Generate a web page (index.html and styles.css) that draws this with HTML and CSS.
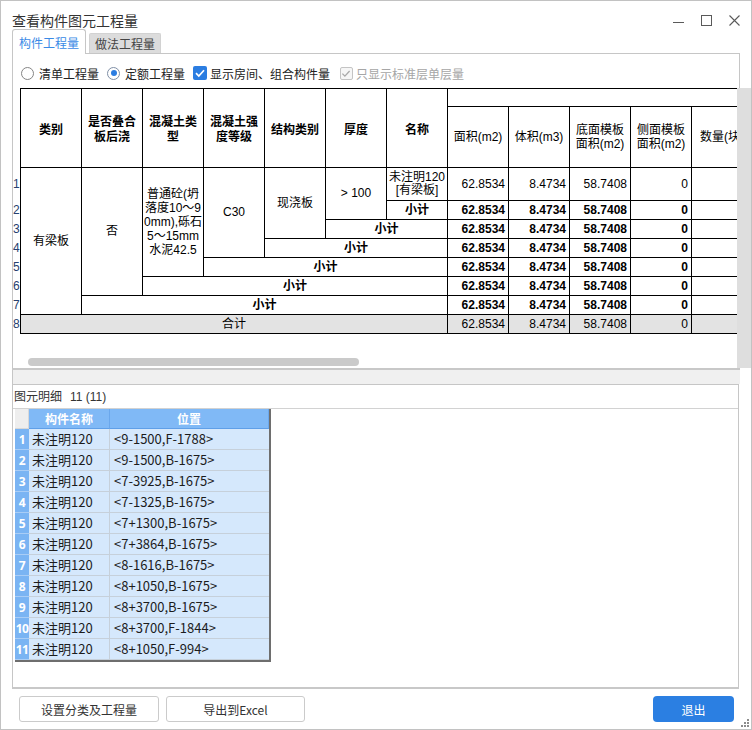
FILE: index.html
```html
<!DOCTYPE html>
<html lang="zh-CN">
<head>
<meta charset="utf-8">
<title>查看构件图元工程量</title>
<link rel="stylesheet" href="styles.css">
</head>
<body>
<div class="window">
  <div class="titlebar">
    <div class="title">查看构件图元工程量</div>
    <div class="controls">
      <svg width="11" height="11" viewBox="0 0 11 11"><path d="M0 7.5H11" stroke="#5a5a5a" stroke-width="1"/></svg>
      <svg width="11" height="11" viewBox="0 0 11 11"><rect x="0.5" y="0.5" width="10" height="10" fill="none" stroke="#5a5a5a" stroke-width="1"/></svg>
      <svg width="11" height="11" viewBox="0 0 11 11"><path d="M0.5 0.5L10.5 10.5M10.5 0.5L0.5 10.5" stroke="#5a5a5a" stroke-width="1.1"/></svg>
    </div>
  </div>

  <div class="tabs">
    <div class="tab active">构件工程量</div>
    <div class="tab">做法工程量</div>
  </div>

  <div class="panel-top">
    <div class="options">
      <label class="opt"><span class="radio"></span><span>清单工程量</span></label>
      <label class="opt"><span class="radio on"></span><span>定额工程量</span></label>
      <label class="opt"><span class="check"><svg width="14" height="14" viewBox="0 0 14 14"><path d="M3 7.2L5.8 10L11 4.2" fill="none" stroke="#fff" stroke-width="1.7"/></svg></span><span>显示房间、组合构件量</span></label>
      <label class="opt opt-dis"><span class="check dis"><svg width="13" height="13" viewBox="0 0 13 13"><path d="M2.6 6.6L5.3 9.3L10.4 3.8" fill="none" stroke="#a9a9a9" stroke-width="1.4"/></svg></span><span>只显示标准层单层量</span></label>
    </div>

    <div class="table-area">
      <div class="viewport">
        <div class="sheet">
          <div class="gutter">
            <div class="g-head"></div>
            <div class="g-row tall">1</div>
            <div class="g-row">2</div>
            <div class="g-row">3</div>
            <div class="g-row">4</div>
            <div class="g-row">5</div>
            <div class="g-row">6</div>
            <div class="g-row">7</div>
            <div class="g-row">8</div>
          </div>
          <div class="grid">
            <div class="c h x1 y1 ry2">类别</div>
            <div class="c h x2 y1 ry2">是否叠合<br>板后浇</div>
            <div class="c h x3 y1 ry2">混凝土类<br>型</div>
            <div class="c h x4 y1 ry2">混凝土强<br>度等级</div>
            <div class="c h x5 y1 ry2">结构类别</div>
            <div class="c h x6 y1 ry2">厚度</div>
            <div class="c h x7 y1 ry2">名称</div>
            <div class="c x8 y1 cx5"></div>

            <div class="c x1 y3 ry7">有梁板</div>
            <div class="c x2 y3 ry6">否</div>
            <div class="c x3 y3 ry5 ml">普通砼(坍<br>落度10～9<br>0mm),砾石<br>5～15mm<br>水泥42.5</div>
            <div class="c x4 y3 ry4">C30</div>
            <div class="c x5 y3 ry3">现浇板</div>
            <div class="c x6 y3 ry2">&gt; 100</div>
            <div class="c x7 y3 nm">未注明120<br>[有梁板]</div>
            <div class="c x7 y4 b">小计</div>
            <div class="c x6 y5 cx2 b">小计</div>
            <div class="c x5 y6 cx3 b">小计</div>
            <div class="c x4 y7 cx4 b">小计</div>
            <div class="c x3 y8 cx5 b">小计</div>
            <div class="c x2 y9 cx6 b">小计</div>
            <div class="c x1 y10 cx7 g">合计</div>

            <div class="c hs">面积(m2)</div>
            <div class="c hs">体积(m3)</div>
            <div class="c hs">底面模板<br>面积(m2)</div>
            <div class="c hs">侧面模板<br>面积(m2)</div>
            <div class="c hs">数量(块)</div>

            <div class="c n">62.8534</div><div class="c n">8.4734</div><div class="c n">58.7408</div><div class="c n">0</div><div class="c n"></div>
            <div class="c n b">62.8534</div><div class="c n b">8.4734</div><div class="c n b">58.7408</div><div class="c n b">0</div><div class="c n"></div>
            <div class="c n b">62.8534</div><div class="c n b">8.4734</div><div class="c n b">58.7408</div><div class="c n b">0</div><div class="c n"></div>
            <div class="c n b">62.8534</div><div class="c n b">8.4734</div><div class="c n b">58.7408</div><div class="c n b">0</div><div class="c n"></div>
            <div class="c n b">62.8534</div><div class="c n b">8.4734</div><div class="c n b">58.7408</div><div class="c n b">0</div><div class="c n"></div>
            <div class="c n b">62.8534</div><div class="c n b">8.4734</div><div class="c n b">58.7408</div><div class="c n b">0</div><div class="c n"></div>
            <div class="c n b">62.8534</div><div class="c n b">8.4734</div><div class="c n b">58.7408</div><div class="c n b">0</div><div class="c n"></div>
            <div class="c n g">62.8534</div><div class="c n g">8.4734</div><div class="c n g">58.7408</div><div class="c n g">0</div><div class="c n g"></div>
          </div>
        </div>
        <div class="hscroll"></div>
      </div>
      <div class="vstrip"></div>
    </div>
  </div>

  <div class="splitter"></div>

  <div class="panel-bottom">
    <div class="caption">图元明细<span class="count">11 (11)</span></div>
    <div class="grid2">
      <div class="g2-corner"></div><div class="g2-head">构件名称</div><div class="g2-head">位置</div>
      <div class="g2-num">1</div><div class="g2-cell">未注明120</div><div class="g2-cell pos">&lt;9-1500,F-1788&gt;</div>
      <div class="g2-num">2</div><div class="g2-cell">未注明120</div><div class="g2-cell pos">&lt;9-1500,B-1675&gt;</div>
      <div class="g2-num">3</div><div class="g2-cell">未注明120</div><div class="g2-cell pos">&lt;7-3925,B-1675&gt;</div>
      <div class="g2-num">4</div><div class="g2-cell">未注明120</div><div class="g2-cell pos">&lt;7-1325,B-1675&gt;</div>
      <div class="g2-num">5</div><div class="g2-cell">未注明120</div><div class="g2-cell pos">&lt;7+1300,B-1675&gt;</div>
      <div class="g2-num">6</div><div class="g2-cell">未注明120</div><div class="g2-cell pos">&lt;7+3864,B-1675&gt;</div>
      <div class="g2-num">7</div><div class="g2-cell">未注明120</div><div class="g2-cell pos">&lt;8-1616,B-1675&gt;</div>
      <div class="g2-num">8</div><div class="g2-cell">未注明120</div><div class="g2-cell pos">&lt;8+1050,B-1675&gt;</div>
      <div class="g2-num">9</div><div class="g2-cell">未注明120</div><div class="g2-cell pos">&lt;8+3700,B-1675&gt;</div>
      <div class="g2-num">10</div><div class="g2-cell">未注明120</div><div class="g2-cell pos">&lt;8+3700,F-1844&gt;</div>
      <div class="g2-num">11</div><div class="g2-cell">未注明120</div><div class="g2-cell pos">&lt;8+1050,F-994&gt;</div>
    </div>
  </div>

  <div class="buttons">
    <button class="btn btn-set">设置分类及工程量</button>
    <button class="btn btn-export">导出到Excel</button>
    <button class="btn btn-exit">退出</button>
  </div>

  <svg class="grip" width="8" height="8" viewBox="0 0 8 8">
    <rect x="6" y="0" width="2" height="2" fill="#8c8c8c"/>
    <rect x="3" y="3" width="2" height="2" fill="#8c8c8c"/>
    <rect x="6" y="3" width="2" height="2" fill="#8c8c8c"/>
    <rect x="0" y="6" width="2" height="2" fill="#8c8c8c"/>
    <rect x="3" y="6" width="2" height="2" fill="#8c8c8c"/>
    <rect x="6" y="6" width="2" height="2" fill="#8c8c8c"/>
  </svg>
</div>
</body>
</html>
```

FILE: styles.css
```css
* { box-sizing: border-box; }
html, body {
  margin: 0;
  padding: 0;
  width: 752px;
  height: 730px;
  overflow: hidden;
  background: #ffffff;
}
body {
  font-family: "Noto Sans CJK SC", "Noto Sans", sans-serif;
  font-size: 12px;
  color: #222;
}
.window {
  position: relative;
  width: 752px;
  height: 730px;
  border: 1px solid #c2c2c2;
  background: #ffffff;
  display: flex;
  flex-direction: column;
}

/* title bar */
.titlebar {
  height: 28px;
  padding-top: 10px;
  padding-left: 11px;
  display: flex;
  align-items: center;
}
.title {
  font-size: 14px;
  line-height: 18px;
  color: #333;
  flex: 1;
}
.controls {
  display: flex;
  align-items: center;
  gap: 17px;
  margin-right: 11px;
}
.controls svg { display: block; }

/* tabs */
.tabs {
  height: 24px;
  margin-left: 11px;
  display: flex;
  align-items: flex-end;
}
.tab {
  font-size: 12px;
  color: #444;
  white-space: nowrap;
}
.tab.active {
  position: relative;
  z-index: 1;
  height: 25px;
  margin-bottom: -1px;
  padding: 3px 6px 0 6px;
  line-height: 20px;
  color: #3a8ae6;
  background: #ffffff;
  border: 1px solid #c6c6c6;
  border-bottom: none;
  border-radius: 3px 3px 0 0;
}
.tab:not(.active) {
  height: 20px;
  margin-left: 3px;
  padding: 0 5px;
  line-height: 19px;
  background: #dcdcdc;
  border: 1px solid #d2d2d2;
  border-bottom: none;
  border-radius: 2px 2px 0 0;
}

/* top panel */
.panel-top {
  margin-left: 11px;
  width: 728px;
  height: 317px;
  border: 1px solid #c6c6c6;
  border-bottom: 2px solid #c8c8c8;
  display: flex;
  flex-direction: column;
}
.options {
  height: 34px;
  padding: 4px 0 0 8px;
  display: flex;
  align-items: center;
  font-size: 12px;
  color: #222;
}
.opt {
  display: flex;
  align-items: center;
  margin-right: 8px;
  white-space: nowrap;
}
.opt-dis { margin-left: 2px; color: #a6a6a6; }
.radio {
  width: 13px;
  height: 13px;
  border: 1px solid #858585;
  border-radius: 50%;
  background: #fff;
  margin-right: 5px;
  display: flex;
  align-items: center;
  justify-content: center;
}
.radio.on { border-color: #7f8fa6; }
.radio.on::after {
  content: "";
  width: 6px;
  height: 6px;
  border-radius: 50%;
  background: #2b7de1;
}
.check {
  width: 14px;
  height: 14px;
  border-radius: 2px;
  background: #2b7de1;
  margin-right: 3px;
  display: flex;
}
.check.dis {
  width: 13px;
  height: 13px;
  background: #f6f6f6;
  border: 1px solid #c4c4c4;
  margin-right: 3px;
}
.check.dis svg { margin: -1px 0 0 -1px; }

.table-area {
  height: 280px;
  margin-right: -12px;
  display: flex;
}
.viewport {
  flex: 1;
  overflow: hidden;
  display: flex;
  flex-direction: column;
}
.vstrip {
  flex: 0 0 14px;
  background: #dedede;
}
.sheet {
  display: flex;
}
.gutter {
  flex: 0 0 7px;
  width: 7px;
  font-family: "Liberation Sans", sans-serif;
  font-size: 12px;
  color: #27406e;
}
.g-head { height: 80px; }
.g-row { height: 19px; line-height: 19px; }
.g-row.tall { height: 33px; line-height: 33px; }

.grid {
  flex-shrink: 0;
  display: grid;
  grid-template-columns: repeat(12, 61px);
  grid-template-rows: 18px 61px 33px repeat(7, 19px);
  border-top: 1px solid #000;
  border-left: 1px solid #000;
  font-family: "Liberation Sans", "Noto Sans CJK SC", sans-serif;
  font-size: 12px;
  color: #000;
}
.c {
  border-right: 1px solid #000;
  border-bottom: 1px solid #000;
  display: flex;
  align-items: center;
  justify-content: center;
  text-align: center;
  line-height: 15px;
  overflow: hidden;
  white-space: nowrap;
}
.h { font-family: "Noto Sans CJK SC", sans-serif; font-weight: 700; }
.hs { line-height: 14px; }
.ml { line-height: 14px; }
.nm { line-height: 13px; }
.b { font-weight: 700; }
.g { background: #e3e3e3; }
.n {
  justify-content: flex-end;
  padding-right: 3px;
  font-size: 12px;
}

.x1 { grid-column-start: 1; }
.x2 { grid-column-start: 2; }
.x3 { grid-column-start: 3; }
.x4 { grid-column-start: 4; }
.x5 { grid-column-start: 5; }
.x6 { grid-column-start: 6; }
.x7 { grid-column-start: 7; }
.x8 { grid-column-start: 8; }
.y1 { grid-row-start: 1; }
.y3 { grid-row-start: 3; }
.y4 { grid-row-start: 4; }
.y5 { grid-row-start: 5; }
.y6 { grid-row-start: 6; }
.y7 { grid-row-start: 7; }
.y8 { grid-row-start: 8; }
.y9 { grid-row-start: 9; }
.y10 { grid-row-start: 10; }
.ry2 { grid-row-end: span 2; }
.ry3 { grid-row-end: span 3; }
.ry4 { grid-row-end: span 4; }
.ry5 { grid-row-end: span 5; }
.ry6 { grid-row-end: span 6; }
.ry7 { grid-row-end: span 7; }
.cx2 { grid-column-end: span 2; }
.cx3 { grid-column-end: span 3; }
.cx4 { grid-column-end: span 4; }
.cx5 { grid-column-end: span 5; }
.cx6 { grid-column-end: span 6; }
.cx7 { grid-column-end: span 7; }

.hscroll {
  margin: 24px 0 0 15px;
  width: 331px;
  height: 8px;
  border-radius: 4px;
  background: #cacaca;
  flex-shrink: 0;
}

/* splitter */
.splitter {
  margin-left: 11px;
  width: 728px;
  height: 14px;
  background: #f0f0f0;
  border-left: 1px solid #c6c6c6;
}

/* bottom panel */
.panel-bottom {
  margin-left: 11px;
  width: 727px;
  height: 305px;
  border: 1px solid #c6c6c6;
  border-bottom: 2px solid #c8c8c8;
  display: flex;
  flex-direction: column;
}
.caption {
  height: 24px;
  padding-left: 1px;
  line-height: 22px;
  font-size: 12px;
  color: #333;
  border-bottom: 1px solid #d2d2d2;
}
.count {
  margin-left: 8px;
  font-family: "Liberation Sans", sans-serif;
}
.grid2 {
  margin-left: 2px;
  width: fit-content;
  display: grid;
  grid-template-columns: 14px 81px 159px;
  grid-template-rows: 20px;
  grid-auto-rows: 21px;
  border-right: 2px solid #6e6e6e;
  border-bottom: 2px solid #6e6e6e;
}
.g2-corner {
  background: #eeeeee;
  border-right: 1px solid #d8d8d8;
  border-bottom: 1px solid #d8d8d8;
}
.g2-head {
  background: #80b9f6;
  border-right: 1px solid #6aa7ec;
  border-bottom: 1px solid #5f9fe8;
  color: #fff;
  font-weight: 700;
  font-size: 12px;
  display: flex;
  align-items: center;
  justify-content: center;
}
.g2-num {
  background: #7ab4f3;
  border-bottom: 1px solid #a9cdf6;
  color: #fff;
  font-weight: 700;
  font-size: 12px;
  font-family: "Noto Sans", sans-serif;
  display: flex;
  align-items: center;
  justify-content: center;
  letter-spacing: -0.5px;
  overflow: hidden;
}
.g2-cell {
  background: #d5e8fc;
  border-right: 1px solid #c6d0da;
  border-bottom: 1px solid #c6d0da;
  font-size: 13px;
  color: #1c1c1c;
  line-height: 20px;
  padding-left: 3px;
  white-space: nowrap;
  overflow: hidden;
}
.g2-cell.pos { padding-left: 4px; border-right: none; }

/* buttons */
.buttons {
  height: 40px;
  padding: 7px 17px 0 18px;
  display: flex;
  align-items: flex-start;
}
.btn {
  height: 26px;
  border: 1px solid #cbcbcb;
  border-radius: 3px;
  background: #ffffff;
  font-family: "Noto Sans CJK SC", sans-serif;
  font-size: 12px;
  color: #333;
  padding: 0;
  display: flex;
  align-items: center;
  justify-content: center;
}
.btn-set { width: 140px; }
.btn-export { width: 139px; margin-left: 7px; }
.btn-exit {
  width: 81px;
  margin-left: auto;
  border: none;
  border-radius: 4px;
  background: #2b7fe2;
  color: #ffffff;
}

.grip {
  position: absolute;
  right: 2px;
  bottom: 2px;
}
```
